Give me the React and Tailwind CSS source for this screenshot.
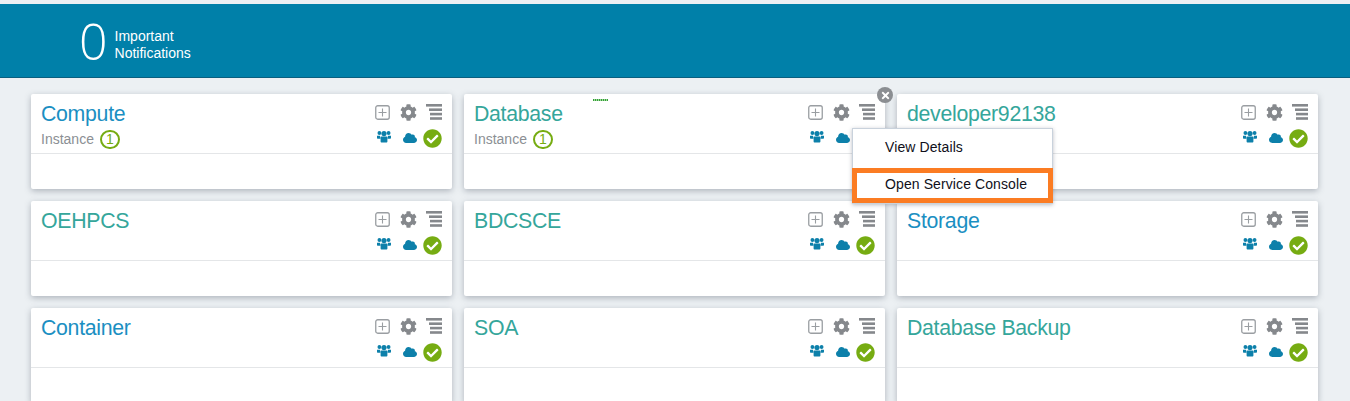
import React from "react";
import { FaCloud, FaCheckCircle, FaCog, FaTimes } from "react-icons/fa";

const BLUE = "text-[#1b8fc2]";
const TEAL = "text-[#35a69b]";

const cards = [
  { title: "Compute", color: BLUE, instance: true },
  { title: "Database", color: TEAL, instance: true, menu: true },
  { title: "developer92138", color: TEAL },
  { title: "OEHPCS", color: TEAL },
  { title: "BDCSCE", color: TEAL },
  { title: "Storage", color: BLUE },
  { title: "Container", color: BLUE },
  { title: "SOA", color: TEAL },
  { title: "Database Backup", color: TEAL },
];

function PlusBox() {
  return (
    <svg width="15" height="15" viewBox="0 0 15 15" fill="none" stroke="#9a9ea2">
      <rect x="0.75" y="0.75" width="13.5" height="13.5" rx="2" strokeWidth="1.3" />
      <path d="M7.5 3.5v8M3.5 7.5h8" strokeWidth="1.1" />
    </svg>
  );
}

function Lines() {
  return (
    <svg width="16" height="16" viewBox="0 0 16 16" fill="#85888c">
      <rect x="0" y="0" width="16" height="2.6" />
      <rect x="3" y="4.4" width="13" height="2.6" />
      <rect x="4" y="8.8" width="12" height="2.6" />
      <rect x="4" y="13.2" width="12" height="2.6" />
    </svg>
  );
}

function Users() {
  return (
    <svg width="14" height="13" viewBox="0 0 14 13" fill="#0d80aa">
      <circle cx="2.4" cy="3" r="1.9" />
      <circle cx="11.6" cy="3" r="1.9" />
      <circle cx="7" cy="3.6" r="2.6" />
      <path d="M0 5.8h3l.6 3H0.6C0.2 8.8 0 8.4 0 8zM14 5.8h-3l-.6 3h2.8c.4 0 .8-.4.8-.8z" />
      <path d="M3.6 7.4c0-.6.5-1 1-1h4.8c.5 0 1 .4 1 1v4.1c0 .6-.5 1-1 1H4.6c-.5 0-1-.4-1-1z" />
    </svg>
  );
}

function Card({ title, color, instance, menu }) {
  return (
    <div className="relative h-[95px] rounded-[2px] bg-white shadow-[0_2px_6px_rgba(60,70,85,0.35)]">
      <div className="flex h-[60px] justify-between border-b border-[#e4e6e8] pl-[10px] pr-[10px]">
        <div className="flex flex-col">
          <div className={`mt-[6px] h-[28px] text-[21.3px] leading-[28px] tracking-[-0.3px] ${color}`}>{title}</div>
          {instance && (
            <div className="mt-[1px] flex items-center gap-[6px] text-[14px] leading-[20px] text-[#8b8f94]">
              <span>Instance</span>
              <span className="flex h-[19px] w-[20px] items-center justify-center rounded-full border-2 border-[#76ac12] text-[14px] leading-none text-[#76ac12]">
                1
              </span>
            </div>
          )}
        </div>
        <div className="flex flex-col items-end pt-[10px]">
          <div className="flex h-[16px] items-center">
            <PlusBox />
            <FaCog className="ml-[10px] text-[17px] text-[#85888c]" />
            <span className="ml-[9px] flex"><Lines /></span>
          </div>
          <div className="mt-[9px] flex h-[18px] items-center">
            <span className="mb-[3px] flex"><Users /></span>
            <FaCloud className="ml-[12px] text-[14px] text-[#0d80aa]" />
            <FaCheckCircle className="ml-[6px] text-[19px] text-[#76ac12]" />
          </div>
        </div>
      </div>
      {menu && (
        <>
          <div className="absolute left-[129px] top-[5px] h-[2px] w-[15px] bg-[repeating-linear-gradient(90deg,#35a035_0_1px,#9fd69f_1px_2px)]" />
          <div className="absolute right-[-8px] top-[-7px] z-20 flex h-[16px] w-[16px] items-center justify-center rounded-full bg-[#8b8e92] text-[11px] text-white">
            <FaTimes />
          </div>
          <div className="absolute left-[388px] top-[34px] z-10 w-[201px] border border-[#c9d2dc] bg-white text-[14px] tracking-[0.1px] text-[#10101a] shadow-[0_1px_4px_rgba(60,70,85,0.35)]">
            <div className="flex h-[39px] items-center pb-[2px] pl-[32px]">View Details</div>
            <div className="mx-[-1px] flex h-[35px] items-center border-[5px] border-[#fb7c23] pb-[3px] pl-[28px]">Open Service Console</div>
          </div>
        </>
      )}
    </div>
  );
}

export default function App() {
  return (
    <div className="h-[401px] overflow-hidden bg-[#ecf0f3] pt-[4px] font-['Liberation_Sans',Arial,sans-serif]">
      <div className="flex h-[74px] items-center border-b border-[#0a5f7f] bg-[#0080a9] pl-[79px] text-white">
        <span className="font-['Open_Sans',sans-serif] text-[50px] font-light leading-none">0</span>
        <div className="ml-[7px] mt-[9px] text-[14px] leading-[17px]">
          <div>Important</div>
          <div>Notifications</div>
        </div>
      </div>
      <div className="grid grid-cols-3 gap-x-[12px] gap-y-[12px] pl-[31px] pr-[32px] pt-[16px]">
        {cards.map((c) => (
          <Card key={c.title} {...c} />
        ))}
      </div>
    </div>
  );
}
